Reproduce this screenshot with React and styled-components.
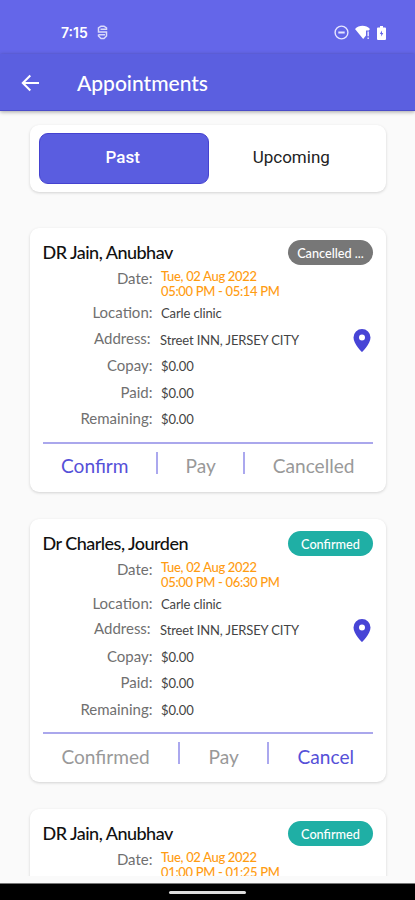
import React, { useState } from "react"
import styled, { createGlobalStyle } from "styled-components"

const GlobalStyle = createGlobalStyle`
  * {
    box-sizing: border-box;
  }
  body {
    margin: 0;
    background: #fafafa;
    font-family: Lato, sans-serif;
  }
`
const Screen = styled.div`
  width: 415px;
  height: 900px;
  display: flex;
  flex-direction: column;
  overflow: hidden;
  background: #fafafa;
`
const StatusBar = styled.div`
  height: 54px;
  flex: none;
  display: flex;
  align-items: center;
  padding: 11px 29px 0 61px;
  background: #6466e9;
  color: white;
`
const Time = styled.span`
  width: 36px;
  font-family: Inter, sans-serif;
  font-size: 14px;
  font-weight: 600;
`
const StatusIcons = styled.div`
  margin-left: auto;
  display: flex;
  align-items: center;
  gap: 6px;
`
const Header = styled.header`
  height: 57px;
  flex: none;
  display: flex;
  align-items: center;
  padding: 1px 20px 0;
  background: #5b5fe0;
  border-bottom: 1px solid #4b4cc9;
  color: white;
  box-shadow: 0 1px 4px rgba(0, 0, 0, 0.35);
`
const Title = styled.h1`
  margin: 1px 0 0 37px;
  font-size: 21px;
  font-weight: 500;
  line-height: 26px;
`
const Content = styled.main`
  height: 765px;
  flex: none;
  padding: 14px 29px 0 30px;
  overflow-y: auto;
  scrollbar-width: none;
`
const Tabs = styled.div`
  height: 67px;
  display: flex;
  padding: 8px 10px 8px 9px;
  margin-bottom: 36px;
  border-radius: 9px;
  background: white;
  box-shadow: 0 1px 3px rgba(0, 0, 0, 0.16);
`
const Tab = styled.button`
  flex: 1;
  height: 51px;
  padding: 0 2px 4px 0;
  border: ${props => (props.$active ? "1px solid #4542d0" : "none")};
  border-radius: 9px;
  background: ${props => (props.$active ? "#5a5de0" : "transparent")};
  color: ${props => (props.$active ? "white" : "#222")};
  font-family: Roboto, sans-serif;
  font-size: 17px;
  font-weight: ${props => (props.$active ? 500 : 400)};
`
const Card = styled.section`
  height: 263.5px;
  padding: 12px 13px 0 12.5px;
  margin-bottom: 27px;
  border-radius: 9px;
  background: white;
  box-shadow: 0 1px 3px rgba(0, 0, 0, 0.16);
`
const CardTop = styled.div`
  height: 25px;
  display: flex;
  align-items: center;
  justify-content: space-between;
`
const Doctor = styled.h2`
  margin: 0;
  color: #111;
  font-size: 18px;
  font-weight: 500;
  line-height: 25px;
  letter-spacing: -0.52px;
`
const Badge = styled.span`
  width: 85px;
  height: 25px;
  border-radius: 13px;
  background: ${props => (props.$cancelled ? "#777" : "#1fafa5")};
  color: white;
  font-size: 12.7px;
  font-weight: 500;
  line-height: 26px;
  text-align: center;
`
const Row = styled.div`
  height: ${props => (props.$tall ? 34 : 26.5)}px;
  display: grid;
  grid-template-columns: 110px 1fr 20px;
  column-gap: 8.5px;
`
const Label = styled.span`
  margin-top: ${props => (props.$raised ? -1 : 0)}px;
  color: #707070;
  font-size: 15px;
  line-height: 26px;
  text-align: right;
  white-space: nowrap;
`
const Value = styled.span`
  margin-left: ${props => (props.$wide ? -1 : 0)}px;
  color: #444;
  font-size: 13px;
  line-height: 29px;
  letter-spacing: -0.12px;
  white-space: nowrap;
`
const When = styled.span`
  padding-top: 4px;
  color: #ff9c12;
  font-size: 13px;
  font-weight: 500;
  line-height: 15px;
  letter-spacing: -0.33px;
  white-space: nowrap;
`
const Actions = styled.div`
  height: 47px;
  display: flex;
  justify-content: space-around;
  align-items: center;
  margin-top: 10px;
  border-top: 2px solid #aaa7ec;
`
const Action = styled.button`
  padding: 0 9.5px;
  border: none;
  background: none;
  color: ${props => (props.$enabled ? "#5550d8" : "#999")};
  font-family: Lato, sans-serif;
  font-size: 19.1px;
  line-height: 24px;
`
const Divider = styled.span`
  width: 2px;
  height: 22px;
  margin-bottom: 7px;
  background: #aba8ee;
`
const NavBar = styled.div`
  height: 17px;
  flex: none;
  display: flex;
  justify-content: center;
  align-items: center;
  margin-top: 7px;
  border-top: 1px solid #777;
  background: black;
`
const Handle = styled.span`
  width: 77px;
  height: 3px;
  border-radius: 2px;
  background: #ddd;
`

const AppIcon = () => (
  <svg width="11" height="15" viewBox="0 0 11 15" fill="none" stroke="#dadafa" strokeWidth="1.5">
    <path d="M9.5 5V3L7 1.200H4L1.500 3v4h8v4L7 13.500H4L1.500 11V9.500" />
    <path d="M1.500 9.700h6.500M3.500 4.300h6" />
  </svg>
)

const DndIcon = () => (
  <svg width="15" height="15" viewBox="0 0 15 15" fill="none" stroke="#e6e6ff" strokeWidth="1.4">
    <circle cx="7.5" cy="7.5" r="6.4" />
    <path d="M4.3 7.5h6.4" strokeWidth="2" />
  </svg>
)

const WifiIcon = () => (
  <svg width="16" height="15" viewBox="0 0 16 15" fill="white">
    <path d="M0 4C4-.2 11-.2 15 4l-1.200 1.500H11v5L8.200 14z" />
    <path d="M12.4 6.5H14v4.7h-1.6zM12.4 12.4H14V14h-1.6z" fill="#dcdcff" />
  </svg>
)

const BatteryIcon = () => (
  <svg width="9" height="14" viewBox="0 0 9 14">
    <path d="M3 0h3v1.5h2q1 0 1 1V13q0 1-1 1H1q-1 0-1-1V2.5q0-1 1-1h2z" fill="white" />
    <path d="M5 4.500 2.800 8h1.400v2.500L6.300 7H5z" fill="#6466e9" />
  </svg>
)

const BackIcon = () => (
  <svg width="20" height="18" viewBox="0 0 20 18" fill="none" stroke="white" strokeWidth="2">
    <path d="M19 9H3M10.3 1.5 2.8 9l7.5 7.5" />
  </svg>
)

const Pin = styled.svg`
  width: 18px;
  height: 23px;
  margin-top: 3px;
  justify-self: end;
  margin-right: 2px;
`

const MapPin = () => (
  <Pin viewBox="0 0 18 23">
    <path
      d="M9 0a8.5 8.5 0 0 0-8.5 8.5C.5 15 9 23 9 23s8.5-8 8.5-14.5A8.5 8.5 0 0 0 9 0zm0 11.5a3 3 0 1 1 0-6 3 3 0 0 1 0 6z"
      fill="#4744d6"
    />
  </Pin>
)

const appointments = [
  {
    doctor: "DR Jain, Anubhav",
    status: "Cancelled ...",
    cancelled: true,
    time: "05:00 PM - 05:14 PM",
    actions: ["Confirm", "Pay", "Cancelled"],
    enabled: "Confirm"
  },
  {
    doctor: "Dr Charles, Jourden",
    status: "Confirmed",
    time: "05:00 PM - 06:30 PM",
    actions: ["Confirmed", "Pay", "Cancel"],
    enabled: "Cancel"
  },
  {
    doctor: "DR Jain, Anubhav",
    status: "Confirmed",
    time: "01:00 PM - 01:25 PM",
    actions: ["Confirmed", "Pay", "Cancel"],
    enabled: "Cancel"
  }
]

const Appointment = ({ item }) => (
  <Card>
    <CardTop>
      <Doctor>{item.doctor}</Doctor>
      <Badge $cancelled={item.cancelled}>{item.status}</Badge>
    </CardTop>
    <Row $tall>
      <Label>Date:</Label>
      <When>
        Tue, 02 Aug 2022
        <br />
        {item.time}
      </When>
    </Row>
    <Row>
      <Label>Location:</Label>
      <Value>Carle clinic</Value>
    </Row>
    <Row>
      <Label $raised>Address:&thinsp;</Label>
      <Value $wide>Street INN, JERSEY CITY</Value>
      <MapPin />
    </Row>
    {["Copay:", "Paid:", "Remaining:"].map(label => (
      <Row key={label}>
        <Label>{label}</Label>
        <Value>$0.00</Value>
      </Row>
    ))}
    <Actions>
      {item.actions.map((action, i) => (
        <React.Fragment key={action}>
          {i > 0 && <Divider />}
          <Action $enabled={action === item.enabled}>{action}</Action>
        </React.Fragment>
      ))}
    </Actions>
  </Card>
)

export default () => {
  const [tab, setTab] = useState("Past")
  return (
    <Screen>
      <GlobalStyle />
      <StatusBar>
        <Time>7:15</Time>
        <AppIcon />
        <StatusIcons>
          <DndIcon />
          <WifiIcon />
          <BatteryIcon />
        </StatusIcons>
      </StatusBar>
      <Header>
        <BackIcon />
        <Title>Appointments</Title>
      </Header>
      <Content>
        <Tabs>
          {["Past", "Upcoming"].map(name => (
            <Tab key={name} $active={tab === name} onClick={() => setTab(name)}>
              {name}
            </Tab>
          ))}
        </Tabs>
        {appointments.map((item, i) => (
          <Appointment key={i} item={item} />
        ))}
      </Content>
      <NavBar>
        <Handle />
      </NavBar>
    </Screen>
  )
}
